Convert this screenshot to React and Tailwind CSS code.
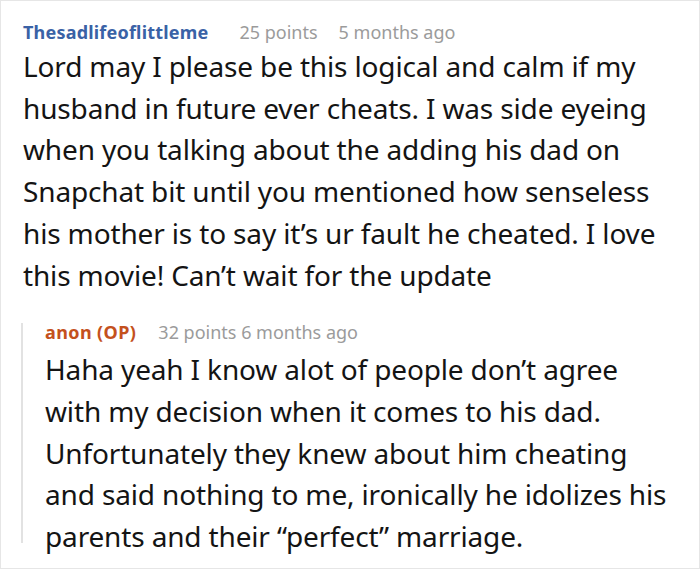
import React from "react";

const comment = {
  author: "Thesadlifeoflittleme",
  points: "25 points",
  time: "5 months ago",
  lines: [
    "Lord may I please be this logical and calm if my",
    "husband in future ever cheats. I was side eyeing",
    "when you talking about the adding his dad on",
    "Snapchat bit until you mentioned how senseless",
    "his mother is to say it\u2019s ur fault he cheated. I love",
    "this movie! Can\u2019t wait for the update",
  ],
  reply: {
    author: "anon (OP)",
    meta: "32 points 6 months ago",
    lines: [
      "Haha yeah I know alot of people don\u2019t agree",
      "with my decision when it comes to his dad.",
      "Unfortunately they knew about him cheating",
      "and said nothing to me, ironically he idolizes his",
      "parents and their \u201cperfect\u201d marriage.",
    ],
  },
};

const App = () => {
  return (
    <div
      className="w-[700px] h-[569px] bg-white border border-[#e6e6e6] px-[20px] pt-[18px] text-[#141414] overflow-hidden"
      style={{ fontFamily: '"Noto Sans", sans-serif' }}
    >
      {/* top level comment */}
      <div className="pl-[2px]">
        <div className="flex items-baseline text-[18px] leading-[26px]">
          <span className="font-bold text-[#3a62a6] tracking-[0.2px]">
            {comment.author}
          </span>
          <span className="ml-[31px] text-[#9b9b9b]">{comment.points}</span>
          <span className="ml-[21px] text-[#9b9b9b]">{comment.time}</span>
        </div>
        <div className="mt-[1px] text-[28px] leading-[41.7px] tracking-[-0.15px] whitespace-nowrap">
          {comment.lines.map((line, i) => (
            <div key={i}>{line}</div>
          ))}
        </div>
      </div>

      {/* reply */}
      <div className="mt-[27px] flex">
        <div className="w-[2px] bg-[#e2e2e2] mb-[15px] shrink-0" />
        <div className="pl-[22px]">
          <div className="flex items-baseline text-[18px] leading-[18px]">
            <span className="font-bold text-[#c4511d] tracking-[0.4px]">
              {comment.reply.author}
            </span>
            <span className="ml-[22px] text-[#9b9b9b]">{comment.reply.meta}</span>
          </div>
          <div className="mt-[8px] text-[28px] leading-[41.7px] tracking-[-0.15px] whitespace-nowrap">
            {comment.reply.lines.map((line, i) => (
              <div key={i}>{line}</div>
            ))}
          </div>
        </div>
      </div>
    </div>
  );
};

export default App;
